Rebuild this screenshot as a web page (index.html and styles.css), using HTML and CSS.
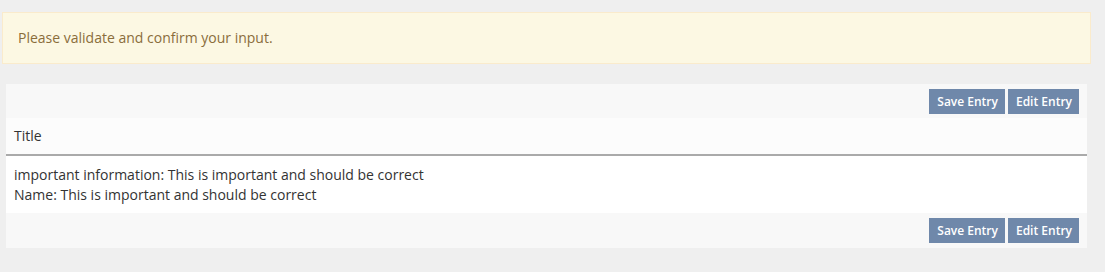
FILE: index.html
```html
<!DOCTYPE html>
<html>
<head>
<meta charset="utf-8">
<link rel="stylesheet" href="styles.css">
</head>
<body>
<div class="alert">Please validate and confirm your input.</div>
<div class="panel">
  <div class="toolbar toolbar-top">
    <button class="btn">Save Entry</button>
    <button class="btn">Edit Entry</button>
  </div>
  <div class="head">Title</div>
  <div class="content">
    <div>important information: This is important and should be correct</div>
    <div>Name: This is important and should be correct</div>
  </div>
  <div class="toolbar toolbar-bottom">
    <button class="btn">Save Entry</button>
    <button class="btn">Edit Entry</button>
  </div>
</div>
</body>
</html>
```
FILE: styles.css
```css
html, body {
  margin: 0;
  background: #efefef;
}
body {
  padding: 12px 14px 0 2px;
  font-family: "Open Sans", "DejaVu Sans", sans-serif;
  font-size: 14px;
  color: #333;
}
.alert {
  background: #fcf8e3;
  border: 1px solid #faebcc;
  color: #8a6d3b;
  padding: 15px 15px;
  line-height: 20px;
}
.panel {
  margin: 20px 4px 0 4px;
}
.toolbar {
  background: #f8f8f8;
  display: flex;
  justify-content: flex-end;
  gap: 3px;
  padding: 5px 8px;
}
.toolbar-top {
  padding-bottom: 4px;
}
.btn {
  font-family: "Open Sans", "DejaVu Sans", sans-serif;
  font-size: 12px;
  font-weight: 600;
  color: #fff;
  background: #6f88aa;
  border: 0;
  border-radius: 0;
  height: 25px;
  line-height: 25px;
  padding: 0 7px 0 8px;
  margin: 0;
}
.head {
  background: #fcfcfc;
  padding: 8px;
  line-height: 20px;
  border-bottom: 2px solid #aaa;
}
.content {
  background: #fff;
  padding: 9px 8px 8px;
  line-height: 20px;
}
```
